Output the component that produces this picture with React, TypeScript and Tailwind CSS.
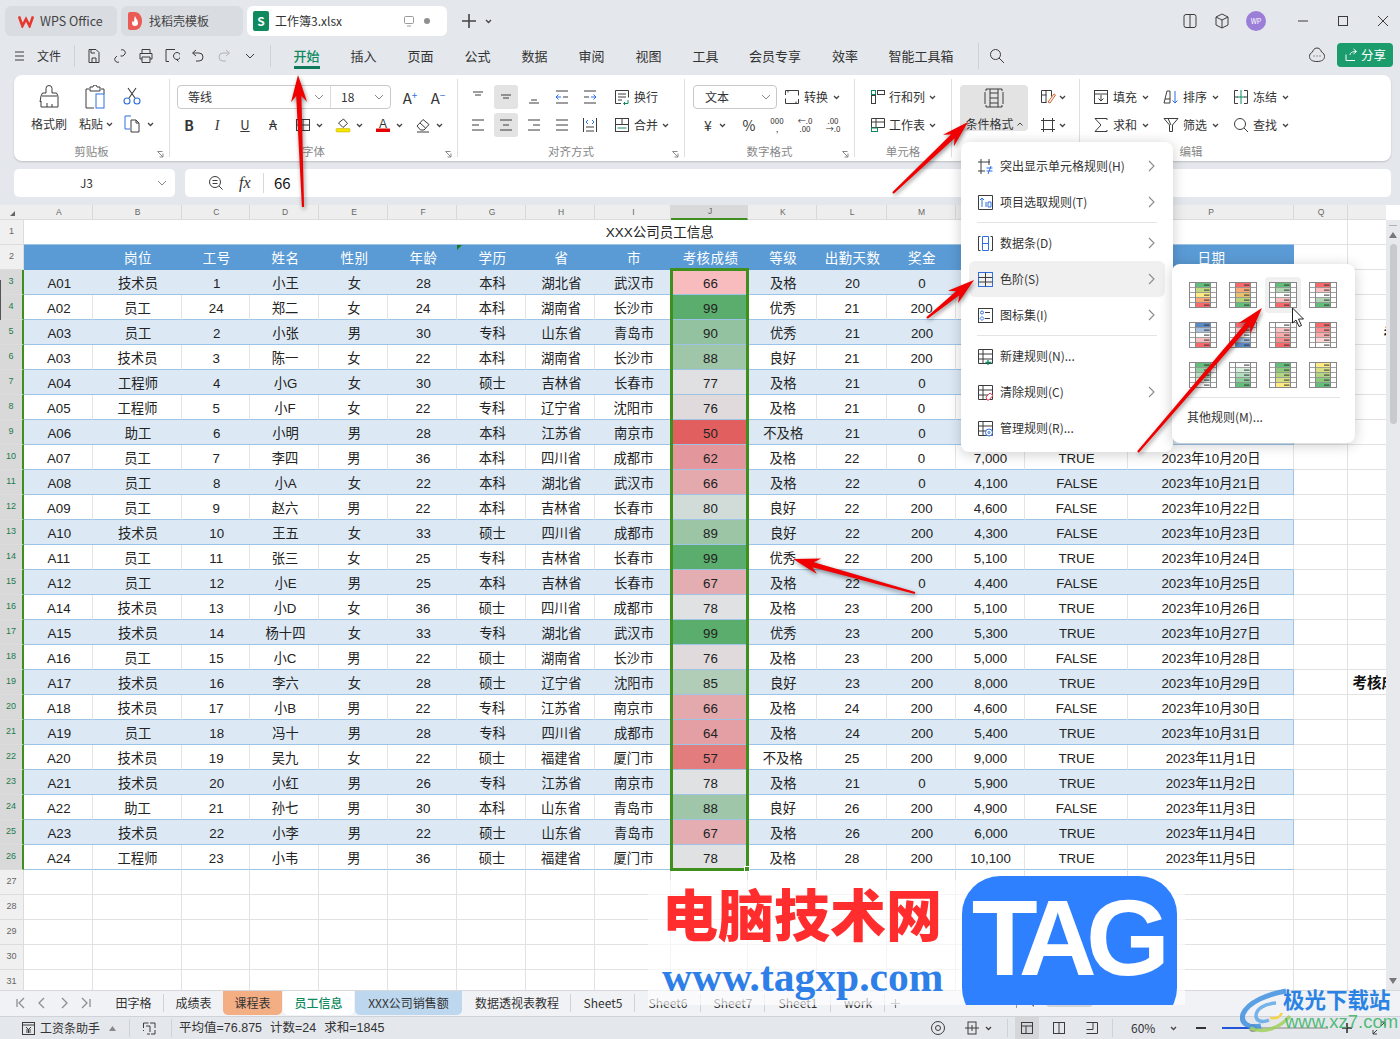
import React from "react";

type P = { children?: React.ReactNode };
const UI = "[font-family:'Noto_Sans_CJK_SC','Liberation_Sans',sans-serif]";
const CELL = "[font-family:'Liberation_Sans','Noto_Sans_CJK_SC',sans-serif]";

function Ico({ s = 16, c = "#3c3c3c", w = 1, children }: { s?: number; c?: string; w?: number; children?: React.ReactNode }) {
  return (
    <svg width={s} height={s} viewBox={`0 0 ${s} ${s}`} fill="none" stroke={c} strokeWidth={w} className="shrink-0">
      {children}
    </svg>
  );
}
const Chev = ({ c = "#444" }: { c?: string }) => (
  <svg width="7" height="5" viewBox="0 0 7 5" fill="none" stroke={c} strokeWidth="1.3" className="shrink-0">
    <path d="M1 1l2.5 2.5L6 1" />
  </svg>
);
const Big = ({ c = "#888" }: { c?: string }) => (
  <svg width="10" height="6" viewBox="0 0 10 6" fill="none" stroke={c} strokeWidth="1" className="shrink-0">
    <path d="M1 1l4 4 4-4" />
  </svg>
);
const Right = () => (
  <svg width="7" height="12" viewBox="0 0 7 12" fill="none" stroke="#8a8a8a" strokeWidth="1.1" className="shrink-0">
    <path d="M1 1l5 5-5 5" />
  </svg>
);
const BLUE = "#2f6fe0";
const GREEN = "#0f8a5f";

/* ---------- title bar ---------- */
function TitleBar() {
  return (
    <div className="flex items-center h-[38px] pl-[5px] pt-[6px] pb-[2px] shrink-0">
      <div className="flex items-center w-[112px] h-[30px] rounded-[6px] bg-[#d9dce1] pl-[13px] gap-[6px]">
        <svg width="16" height="13" viewBox="0 0 16 13" fill="none" stroke="#e8372c" strokeWidth="2.6" className="shrink-0">
          <path d="M1 1.5l3.4 9.5L8 4l3.6 7L15 1.5" />
        </svg>
        <span className="text-[12.5px] text-[#444]">WPS Office</span>
      </div>
      <div className="flex items-center w-[122px] h-[30px] rounded-[6px] bg-[#d9dce1] ml-[4px] pl-[7px] gap-[7px]">
        <svg width="14" height="18" viewBox="0 0 14 18" className="shrink-0">
          <path d="M0 2a2 2 0 012-2h5c4 0 7 4 7 9s-3 9-7 9H2a2 2 0 01-2-2z" fill="#ea5b55" />
          <path d="M7 4c1 3 3 4 3 7a3 3 0 01-6 0c0-1 .5-2 1-2 .5 1 1 1 1 1 .5-2 0-4 1-6z" fill="#fff" />
        </svg>
        <span className="text-[12px] text-[#444]">找稻壳模板</span>
      </div>
      <div className="flex items-center w-[200px] h-[30px] rounded-[6px] bg-white ml-[4px] pl-[6px]">
        <div className="w-[16px] h-[20px] rounded-[2px] bg-[#0f8a5f] flex items-center justify-center text-white text-[12px] font-bold">S</div>
        <span className="ml-[6px] text-[12px] text-[#333] w-[128px]">工作簿3.xlsx</span>
        <Ico s={12} c="#9a9a9a">
          <rect x="1.5" y="1.5" width="9" height="7" rx="1" />
          <path d="M4 11h4" />
        </Ico>
        <span className="ml-[9px] w-[6px] h-[6px] rounded-full bg-[#8f8f8f]" />
      </div>
      <svg width="16" height="16" viewBox="0 0 16 16" stroke="#444" strokeWidth="1.6" className="ml-[14px] shrink-0">
        <path d="M8 1v14M1 8h14" />
      </svg>
      <span className="ml-[8px]"><Chev /></span>
      <div className="ml-auto flex items-center">
        <Ico s={16}>
          <rect x="2" y="1.5" width="12" height="13" rx="2" />
          <path d="M8 1.5v13" />
        </Ico>
        <span className="ml-[16px]">
          <Ico s={16}>
            <path d="M8 1l6 3v8l-6 3-6-3V4zM2 4l6 3 6-3M8 7v8" />
          </Ico>
        </span>
        <div className="ml-[16px] w-[20px] h-[20px] rounded-full bg-[#9b7ed8] text-white text-[7px] flex items-center justify-center">WP</div>
        <span className="ml-[31px]"><Ico s={12}><path d="M1 6h10" /></Ico></span>
        <span className="ml-[28px]"><Ico s={12}><rect x="1.5" y="1.5" width="9" height="9" /></Ico></span>
        <span className="ml-[28px] mr-[11px]"><Ico s={12}><path d="M1 1l10 10M11 1L1 11" /></Ico></span>
      </div>
    </div>
  );
}

/* ---------- menu bar ---------- */
const qa: React.ReactNode[] = [
  <path key="s" d="M3 1.5h7l3 3v10H3zM6 14.5V10h4v4.500M5 1.500V5h4" />,
  <path key="l" d="M9 2a3 3 0 014 4l-2 2H8.500M7 14a3 3 0 01-4-4l2-2" />,
  <path key="p" d="M4 5V1.500h8V5M2 5.500h12V11h-2M2 5.500V11h2M4 9h8v5.500H4z" />,
  <g key="q"><path d="M11 1.500H2v12h3M9.500 8a3.500 3.500 0 110 .01M12 11l2.500 2.500" /></g>,
  <path key="u" d="M6 2L2.500 5 6 8M3 5h6a4 4 0 010 8H6" />,
  <path key="r" d="M10 2l3.500 3L10 8M13 5H7a4 4 0 000 8h3" stroke="#b4b4b4" />,
  <path key="c" d="M4 6l4 4 4-4" />,
];
function MenuBar() {
  const tabs: [string, string][] = [
    ["插入", "w-[57px]"], ["页面", "w-[57px]"], ["公式", "w-[57px]"], ["数据", "w-[57px]"], ["审阅", "w-[57px]"], ["视图", "w-[57px]"], ["工具", "w-[57px]"],
    ["会员专享", "w-[82px]"], ["效率", "w-[58px]"], ["智能工具箱", "w-[94px]"],
  ];
  return (
    <div className="flex items-center h-[32px] pl-[14px] pt-[4px] shrink-0 text-[13px] text-[#333]">
      <Ico s={12}><path d="M1 2h9M1 6h9M1 10h9" /></Ico>
      <span className="ml-[11px] text-[12px]">文件</span>
      <div className="ml-[13px] w-px h-[22px] bg-[#cfd2d6]" />
      <div className="flex ml-[6px]">
        {qa.map((q, i) => (
          <div key={i} className="w-[26px] flex justify-center"><Ico s={16}>{q}</Ico></div>
        ))}
      </div>
      <div className="ml-[7px] w-px h-[22px] bg-[#cfd2d6]" />
      <div className="ml-[7px] w-[57px] flex justify-center">
        <span className="relative text-[#0f8a5f] font-medium">
          开始
          <span className="absolute left-0 right-0 bottom-[-3px] h-[3px] bg-[#0f7b5a]" />
        </span>
      </div>
      {tabs.map(([t, w]) => (
        <div key={t} className={`${w} flex justify-center`}>{t}</div>
      ))}
      <div className="ml-[10px] w-px h-[26px] bg-[#cfd2d6]" />
      <span className="ml-[10px]">
        <Ico s={16}><circle cx="6.500" cy="6.500" r="5" /><path d="M10 10l5 5" /></Ico>
      </span>
      <div className="ml-auto flex items-center mr-[7px] mt-[-2px]">
        <Ico s={18}>
          <path d="M9 2c3 0 4 2.500 4.500 4 2 1 3 2.500 3 4.500 0 3-2.500 5-7.500 5s-7.500-2-7.500-5c0-2 1-3.500 3-4.500C5 4.500 6 2 9 2z" />
          <path d="M5.500 10h1M8.500 10h1M11.500 10h1" />
        </Ico>
        <div className="ml-[11px] w-[56px] h-[24px] rounded-[4px] bg-[#1b9c6d] text-white text-[12.500px] flex items-center justify-center gap-[3px]">
          <Ico s={14} c="#fff"><path d="M2 6.500V12.500h9M6 7c0-2 2-3.500 6-3.500M9.500 1l3 2.500-3 2.500" /></Ico>
          分享
        </div>
      </div>
    </div>
  );
}

/* ---------- ribbon ---------- */
const Launcher = () => (
  <span className="absolute right-[5px] bottom-[3px]">
    <svg width="7" height="7" viewBox="0 0 7 7" fill="none" stroke="#8a8a8a" strokeWidth="1"><path d="M.5 .5h5M.5 .5l5.500 5.500M6 2.500V6H2.500" /></svg>
  </span>
);
function Group({ w, label, lab = "w-full", launcher, children }: { w: string; label: string; lab?: string; launcher?: boolean; children?: React.ReactNode }) {
  return (
    <div className={`relative ${w} shrink-0 pt-[10px] flex flex-col`}>
      <div className="h-[52px] shrink-0">{children}</div>
      <div className={`${lab} h-[17px] mt-[6px] flex items-center justify-center text-[11.500px] text-[#888]`}>{label}</div>
      {launcher && <Launcher />}
    </div>
  );
}
const Sep = () => <div className="w-px h-[78px] self-center bg-[#dfdfdf] shrink-0" />;
const Cell28 = ({ on, children }: { on?: boolean; children?: React.ReactNode }) => (
  <div className="w-[28px] h-[24px] flex items-center justify-center">
    <div className={`w-[24px] h-[24px] rounded-[3px] flex items-center justify-center ${on ? "bg-[#e3e3e3]" : ""}`}>{children}</div>
  </div>
);
const Drop = ({ children }: P) => (
  <div className="w-[40px] h-[24px] pl-[8px] flex items-center gap-[5px]">{children}<Chev /></div>
);
const TextDrop = ({ icon, t, w = "gap-[4px]" }: { icon: React.ReactNode; t: string; w?: string }) => (
  <div className={`flex items-center ${w} text-[12px] text-[#333] h-[24px]`}>
    {icon}<span className="whitespace-nowrap">{t}</span><span className="ml-[1px]"><Chev /></span>
  </div>
);
const Row = ({ children, cls = "" }: { children?: React.ReactNode; cls?: string }) => <div className={`flex items-center h-[24px] ${cls}`}>{children}</div>;
const lines = (ys: [number, number, number][], c = "#3c3c3c") => ys.map(([a, b, y], i) => <path key={i} d={`M${a} ${y}H${b}`} stroke={c} />);

function Ribbon() {
  return (
    <div className="flex ml-[14px] mr-[9px] mt-[5px] h-[86px] shrink-0 bg-white rounded-[8px] shadow-[0_1px_2px_rgba(0,0,0,0.18)] text-[12px]">
      <Group w="w-[155px]" label="剪贴板" launcher>
        <div className="flex pl-[15px]">
          <div className="w-[40px] flex flex-col items-center">
            <div className="h-[24px]">
              <Ico s={24}>
                <path d="M9 3.500a3 3 0 016 0V8h4.500l1.500 3v11H4v-6l-1 1 1-6 1.500-3H9zM5 11h15M10 22v-4M15 22v-3" />
              </Ico>
            </div>
            <div className="mt-[6px] whitespace-nowrap">格式刷</div>
          </div>
          <div className="ml-[10px] w-[44px] flex flex-col items-start">
            <div className="h-[24px] ml-[4px]">
              <Ico s={24}>
                <path d="M6 4H3v19h8M18 4h3v5M7 6V2h3a2 2 0 014 0h3v4z" />
                <rect x="13" y="9" width="8" height="14" stroke={BLUE} />
              </Ico>
            </div>
            <div className="mt-[6px] flex items-center gap-[3px] whitespace-nowrap">粘贴<Chev /></div>
          </div>
          <div className="ml-[-1px] flex flex-col">
            <div className="h-[24px] mt-[2px]">
              <Ico s={20} w={1.1}>
                <path d="M6 1l7 10M14 1L7 11" stroke="#3c3c3c" />
                <circle cx="5" cy="14" r="3" stroke={BLUE} />
                <circle cx="15" cy="14" r="3" stroke={BLUE} />
              </Ico>
            </div>
            <div className="mt-[4px] ml-[1px] flex items-center gap-[6px]">
              <Ico s={18}>
                <path d="M8 1H2v13h5" stroke={BLUE} />
                <path d="M8 5h5l3 3v9H8zM13 5v3h3" />
              </Ico>
              <Chev />
            </div>
          </div>
        </div>
      </Group>
      <Sep />
      <Group w="w-[287px]" label="字体" launcher>
        <Row cls="pl-[7px]">
          <div className="w-[214px] h-[24px] rounded-[4px] border border-[#c8c8c8] flex items-center">
            <div className="w-[153px] h-full flex items-center justify-between pl-[10px] pr-[6px] border-r border-[#dcdcdc]">等线<Big /></div>
            <div className="flex-1 h-full flex items-center justify-between pl-[10px] pr-[6px]">18<Big /></div>
          </div>
          <div className="ml-[5px]"><Cell28><span className="text-[15px] leading-none">A<sup className="text-[10px] text-[#2f6fe0]">+</sup></span></Cell28></div>
          <Cell28><span className="text-[15px] leading-none">A<sup className="text-[10px] text-[#2f6fe0]">−</sup></span></Cell28>
        </Row>
        <Row cls="mt-[4px] pl-[5px]">
          <Cell28><span className="text-[14px] font-bold">B</span></Cell28>
          <Cell28><span className="text-[14px] italic [font-family:'Liberation_Serif',serif]">I</span></Cell28>
          <Cell28><span className="text-[13px] underline">U</span></Cell28>
          <Cell28><span className="text-[13px] line-through">A</span></Cell28>
          <Drop><Ico s={16}><rect x="1.500" y="2.500" width="13" height="11" /><path d="M8 2.500v11M1.500 8h13" /></Ico></Drop>
          <Drop>
            <Ico s={16}>
              <path d="M3.500 6l5-4 4 4.500-4.500 4z" />
              <rect x="1" y="11.500" width="14" height="3.500" rx="1" fill="#f5e400" stroke="#b8a800" strokeWidth=".5" />
            </Ico>
          </Drop>
          <Drop>
            <svg width="16" height="16" viewBox="0 0 16 16" className="shrink-0">
              <text x="8" y="10.500" textAnchor="middle" fontSize="12" fill="#333" fontFamily="Liberation Sans">A</text>
              <rect x="1" y="11.500" width="14" height="3.500" rx=".5" fill="#e30000" />
            </svg>
          </Drop>
          <Drop>
            <Ico s={16}>
              <path d="M2 9l6-6.500 6 5-5 5.500H5.500zM5 6l5.500 5M2 15h12" />
            </Ico>
          </Drop>
        </Row>
      </Group>
      <Sep />
      <Group w="w-[226px]" label="对齐方式" launcher>
        <Row cls="pl-[6px]">
          <Cell28><Ico>{lines([[3, 13, 3], [5, 11, 6]])}</Ico></Cell28>
          <Cell28 on><Ico>{lines([[3, 13, 6], [5, 11, 9]])}</Ico></Cell28>
          <Cell28><Ico>{lines([[5, 11, 11], [3, 13, 14]])}</Ico></Cell28>
          <Cell28>
            <Ico>
              {lines([[2, 14, 2], [9, 14, 8], [2, 14, 14]])}
              <path d="M7 8H2M4.500 5.500L2 8l2.500 2.500" stroke={BLUE} />
            </Ico>
          </Cell28>
          <Cell28>
            <Ico>
              {lines([[2, 14, 2], [2, 7, 8], [2, 14, 14]])}
              <path d="M9 8h5M11.500 5.500L14 8l-2.500 2.500" stroke={BLUE} />
            </Ico>
          </Cell28>
          <div className="ml-[10px] flex items-center gap-[4px]">
            <Ico>
              <path d="M7 14.500H1.500v-13h13v7" />
              {lines([[4, 12, 5], [4, 12, 8], [4, 8, 11]])}
              <path d="M14 11v3.500h-4M11 13l-1.500 1.500L11 16" stroke={GREEN} />
            </Ico>
            换行
          </div>
        </Row>
        <Row cls="mt-[4px] pl-[6px]">
          <Cell28><Ico>{lines([[2, 14, 3], [2, 9, 8], [2, 14, 13]])}</Ico></Cell28>
          <Cell28 on><Ico>{lines([[2, 14, 3], [5, 11, 8], [2, 14, 13]])}</Ico></Cell28>
          <Cell28><Ico>{lines([[2, 14, 3], [7, 14, 8], [2, 14, 13]])}</Ico></Cell28>
          <Cell28><Ico>{lines([[2, 14, 3], [2, 14, 8], [2, 14, 13]])}</Ico></Cell28>
          <Cell28>
            <Ico>
              <path d="M1.500 1v14M14.500 1v14M4 14h8M4 10h8" />
              <path d="M6 3L4 5l2 2M10 3l2 2-2 2" stroke={BLUE} />
            </Ico>
          </Cell28>
          <div className="ml-[10px] flex items-center gap-[4px]">
            <Ico>
              <rect x="1.500" y="1.500" width="13" height="13" />
              <path d="M8 1.500v6M1.500 7.500h13" />
              <path d="M3.500 11h9" stroke={GREEN} />
            </Ico>
            合并<Chev />
          </div>
        </Row>
      </Group>
      <Sep />
      <Group w="w-[169px]" label="数字格式" launcher>
        <Row cls="pl-[8px]">
          <div className="w-[84px] h-[24px] rounded-[4px] border border-[#c8c8c8] flex items-center justify-between pl-[11px] pr-[5px]">文本<Big /></div>
          <div className="ml-[7px]">
            <TextDrop t="转换" icon={
              <Ico>
                <path d="M12 1.500h2.500v5M4 14.500H1.500v-5M4 1.500h8M4 3.500v-2M12 14.500H4M12 12.500v2M1.500 6V1.500H4M14.500 10v4.500H12" />
              </Ico>
            } />
          </div>
        </Row>
        <Row cls="mt-[4px] pl-[8px]">
          <div className="w-[42px] flex items-center pl-[7px] gap-[3px] text-[14px]"><span className="w-[16px] text-center">¥</span><Chev /></div>
          <Cell28><span className="text-[14px]">%</span></Cell28>
          <Cell28><span className="text-[8px] leading-[8px] text-center">000<br />,</span></Cell28>
          <Cell28><span className="text-[8px] leading-[8px] text-center">←.0<br />.00</span></Cell28>
          <Cell28><span className="text-[8px] leading-[8px] text-center">.00<br />→.0</span></Cell28>
        </Row>
      </Group>
      <Sep />
      <Group w="w-[96px]" label="单元格">
        <Row cls="pl-[15px]">
          <TextDrop w="gap-[3px]" t="行和列" icon={
            <Ico>
              <rect x="1.500" y="1.500" width="4" height="4" stroke={GREEN} />
              <rect x="1.500" y="6.500" width="4" height="8" />
              <rect x="7.500" y="1.500" width="7" height="4" />
            </Ico>
          } />
        </Row>
        <Row cls="mt-[4px] pl-[15px]">
          <TextDrop w="gap-[3px]" t="工作表" icon={
            <Ico>
              <path d="M1.500 1.500h13v9h-13zM1.500 5h13M6 1.500v9" />
              <rect x="1.500" y="11" width="6" height="3.500" stroke={GREEN} />
            </Ico>
          } />
        </Row>
      </Group>
      <Sep />
      <Group w="w-[127px]" label="样式">
        <div className="flex pl-[8px]">
          <div className="w-[68px] h-[46px] rounded-[4px] bg-[#e3e3e3] flex flex-col items-center">
            <div className="mt-[3px] h-[20px]">
              <Ico s={20}>
                <path d="M2 3V1h16v2M2 17v2h16v-2M1 4v12M19 4v12M6 1v18M14 1v18M6 10h8M6 5h8M6 15h8" />
              </Ico>
            </div>
            <div className="mt-[7px] leading-[18px] flex items-center gap-[3px] whitespace-nowrap">
              条件格式
              <svg width="6" height="4" viewBox="0 0 6 4" fill="none" stroke="#444"><path d="M.5 3.500L3 1l2.500 2.500" /></svg>
            </div>
          </div>
          <div className="ml-[12px] flex flex-col">
            <Row>
              <Ico>
                <path d="M1.500 1.500h10v6M1.500 1.500v12h5M1.500 6h5M6 1.500v12" />
                <path d="M8 13l6-8 1.500 1L10 14z" stroke="#d0632a" />
              </Ico>
              <span className="ml-[3px]"><Chev /></span>
            </Row>
            <Row cls="mt-[4px]">
              <Ico><path d="M3.500 1v14M12.500 1v14M1 3.500h14M1 12.500h14" /></Ico>
              <span className="ml-[3px]"><Chev /></span>
            </Row>
          </div>
        </div>
      </Group>
      <Sep />
      <Group w="flex-1" label="编辑" lab="w-[222px]">
        <Row cls="pl-[13px] gap-[15px]">
          <div className="w-[55px]"><TextDrop t="填充" icon={<Ico><rect x="1.500" y="1.500" width="13" height="13" /><path d="M1.500 5h13M8 6v6M5.500 9.500L8 12l2.500-2.500" /></Ico>} /></div>
          <div className="w-[55px]"><TextDrop t="排序" icon={<Ico><path d="M1 14L4 2h3v12H1M2 10h5" /><path d="M12 2v12M9.500 11.500L12 14l2.500-2.500" stroke={BLUE} /></Ico>} /></div>
          <div className="w-[55px]"><TextDrop t="冻结" icon={<Ico><path d="M5 1.500H1.500v13H5M11 1.500h3.500v13H11M1.500 8H5M11 8h3.500" /><path d="M8 1v14M4 8h8" stroke={GREEN} /></Ico>} /></div>
        </Row>
        <Row cls="mt-[4px] pl-[13px] gap-[15px]">
          <div className="w-[55px]"><TextDrop t="求和" icon={<Ico><path d="M14 3V1.500H2l6 6.500-6 6.500h12V13" /></Ico>} /></div>
          <div className="w-[55px]"><TextDrop t="筛选" icon={<Ico><path d="M1 1.500h14L9.500 8v6.500l-3 0V8zM5 1.500L8 8" /></Ico>} /></div>
          <div className="w-[55px]"><TextDrop t="查找" icon={<Ico><circle cx="7" cy="7" r="5.500" /><path d="M11 11l4 4" /></Ico>} /></div>
        </Row>
      </Group>
    </div>
  );
}

function FormulaBar() {
  return (
    <div className="flex mt-[8px] ml-[14px] mr-[9px] h-[28px] shrink-0 gap-[10px]">
      <div className="w-[161px] rounded-[5px] bg-white flex items-center pr-[8px]">
        <span className="flex-1 text-center text-[12px] pl-[2px]">J3</span>
        <Big />
      </div>
      <div className="flex-1 rounded-[5px] bg-white flex items-center">
        <span className="ml-[23px]"><Ico><circle cx="7" cy="7" r="5.500" /><path d="M11 11l3.500 3.500M4.500 5.500h5M4.500 8.500h5" /></Ico></span>
        <span className="ml-[15px] italic text-[16px] [font-family:'Liberation_Serif',serif] w-[18px]">fx</span>
        <div className="ml-[6px] w-px h-[20px] bg-[#d8d8d8]" />
        <span className="ml-[10px] text-[15px] text-[#111]">66</span>
      </div>
    </div>
  );
}

/* ---------- sheet ---------- */
const COLS = "grid grid-cols-[24px_68.5px_89px_68.5px_69px_69px_69px_69px_69px_76px_77px_68.5px_70px_69px_69px_103px_166px_54px_39px]";
const letters = ["A", "B", "C", "D", "E", "F", "G", "H", "I", "J", "K", "L", "M", "N", "O", "P", "Q", ""];
const heads = ["", "岗位", "工号", "姓名", "性别", "年龄", "学历", "省", "市", "考核成绩", "等级", "出勤天数", "奖金", "工资", "是否转正", "日期"];
const raw = `A01 技术员 1 小王 女 28 本科 湖北省 武汉市 66 及格 20 0 5,100 TRUE 2023年10月13日
A02 员工 24 郑二 女 24 本科 湖南省 长沙市 99 优秀 21 200 4,800 TRUE 2023年10月14日
A03 员工 2 小张 男 30 专科 山东省 青岛市 90 优秀 21 200 4,600 FALSE 2023年10月15日
A03 技术员 3 陈一 女 22 本科 湖南省 长沙市 88 良好 21 200 5,200 TRUE 2023年10月16日
A04 工程师 4 小G 女 30 硕士 吉林省 长春市 77 及格 21 0 6,800 TRUE 2023年10月17日
A05 工程师 5 小F 女 22 专科 辽宁省 沈阳市 76 及格 21 0 6,200 TRUE 2023年10月18日
A06 助工 6 小明 男 28 本科 江苏省 南京市 50 不及格 21 0 4,000 FALSE 2023年10月19日
A07 员工 7 李四 男 36 本科 四川省 成都市 62 及格 22 0 7,000 TRUE 2023年10月20日
A08 员工 8 小A 女 22 本科 湖北省 武汉市 66 及格 22 0 4,100 FALSE 2023年10月21日
A09 员工 9 赵六 男 22 本科 吉林省 长春市 80 良好 22 200 4,600 FALSE 2023年10月22日
A10 技术员 10 王五 女 33 硕士 四川省 成都市 89 良好 22 200 4,300 FALSE 2023年10月23日
A11 员工 11 张三 女 25 专科 吉林省 长春市 99 优秀 22 200 5,100 TRUE 2023年10月24日
A12 员工 12 小E 男 25 本科 吉林省 长春市 67 及格 22 0 4,400 FALSE 2023年10月25日
A14 技术员 13 小D 女 36 硕士 四川省 成都市 78 及格 23 200 5,100 TRUE 2023年10月26日
A15 技术员 14 杨十四 女 33 专科 湖北省 武汉市 99 优秀 23 200 5,300 TRUE 2023年10月27日
A16 员工 15 小C 男 22 硕士 湖南省 长沙市 76 及格 23 200 5,000 FALSE 2023年10月28日
A17 技术员 16 李六 女 28 硕士 辽宁省 沈阳市 85 良好 23 200 8,000 TRUE 2023年10月29日
A18 技术员 17 小B 男 22 专科 江苏省 南京市 66 及格 24 200 4,600 FALSE 2023年10月30日
A19 员工 18 冯十 男 28 专科 四川省 成都市 64 及格 24 200 5,400 TRUE 2023年10月31日
A20 技术员 19 吴九 女 22 硕士 福建省 厦门市 57 不及格 25 200 9,000 TRUE 2023年11月1日
A21 技术员 20 小红 男 26 专科 江苏省 南京市 78 及格 21 0 5,900 TRUE 2023年11月2日
A22 助工 21 孙七 男 30 本科 山东省 青岛市 88 良好 26 200 4,900 FALSE 2023年11月3日
A23 技术员 22 小李 男 22 硕士 山东省 青岛市 67 及格 26 200 6,000 TRUE 2023年11月4日
A24 工程师 23 小韦 男 36 硕士 福建省 厦门市 78 及格 28 200 10,100 TRUE 2023年11月5日`
  .split("\n")
  .map((l) => l.split(" "));
const jc = [
  "bg-[#f9bcbe]", "bg-[#5aad6c]", "bg-[#93c2a1]", "bg-[#9fc6a9]", "bg-[#e0dfe1]", "bg-[#e0dadc]", "bg-[#e25f60]", "bg-[#e3979c]",
  "bg-[#e3a9ad]", "bg-[#d1dcd9]", "bg-[#9bc5a5]", "bg-[#5aad6c]", "bg-[#e3adb1]", "bg-[#e0e1e3]", "bg-[#5aad6c]", "bg-[#e0dadc]",
  "bg-[#b1cdb8]", "bg-[#e3a9ad]", "bg-[#e39fa3]", "bg-[#e37c7d]", "bg-[#e0e1e3]", "bg-[#9fc6a9]", "bg-[#e3adb1]", "bg-[#e0e1e3]",
];
const RowHead = ({ n, sel }: { n: number; sel?: boolean }) => (
  <div className={`flex items-center justify-center text-[9px] border-b border-[#dcdcdc] ${sel ? "bg-[#d9d9d9] text-[#1d7a4c] border-r-[2px] border-r-[#3f8f1f]" : "bg-[#f0f0f0] text-[#666] border-r border-r-[#dcdcdc]"}`}>{n}</div>
);
const Blank = ({ n }: { n: number }) => (
  <>
    {Array.from({ length: n }).map((_, i) => (
      <div key={i} className="border-r border-b border-[#e2e2e2]" />
    ))}
  </>
);
function Sheet() {
  return (
    <div className={`relative flex mt-[8px] h-[785px] shrink-0 bg-white text-[13.300px] text-[#222] ${CELL}`}>
      <div className="w-[1386px] overflow-hidden">
        <div className={`${COLS} h-[15px] bg-[#eeeeee]`}>
          <div className="flex items-end justify-center pb-[2px] border-b border-[#dcdcdc]">
            <svg width="7" height="7" viewBox="0 0 7 7"><path d="M6 1v5H1z" fill="#666" /></svg>
          </div>
          {letters.map((l, i) => (
            <div key={i} className={`flex items-center justify-center pl-[2px] text-[8.500px] text-[#666] border-r border-[#d8d8d8] ${l === "J" ? "bg-[#d9d9d9] border-b-[2px] border-b-[#3f8f1f]" : "border-b border-b-[#dcdcdc]"}`}>{l}</div>
          ))}
        </div>
        <div className={`${COLS} h-[25px]`}>
          <RowHead n={1} />
          <div className="col-span-16 flex items-center justify-center pt-[3px] pl-[2px] border-b border-[#9dc3e6] text-[13.500px]">XXX公司员工信息</div>
          <Blank n={2} />
        </div>
        <div className={`${COLS} h-[25px]`}>
          <RowHead n={2} />
          {heads.map((h, i) => (
            <div key={i} className="relative bg-[#5b9bd5] text-white text-[13.500px] tracking-[0.4px] flex items-center justify-center pt-[3px] pl-[2px]">
              {h}
              {i === 6 && <span className="absolute left-0 top-0 border-t-[5px] border-r-[5px] border-t-[#1a7a1a] border-r-transparent" />}
            </div>
          ))}
          <Blank n={2} />
        </div>
        {raw.map((r, ri) => {
          const odd = ri % 2 === 0;
          return (
            <div key={ri} className={`${COLS} h-[25px]`}>
              <RowHead n={ri + 3} sel />
              {r.map((v, ci) => (
                <div
                  key={ci}
                  className={`flex items-center justify-center pt-[3px] pl-[2px] border-b border-[#9dc3e6] whitespace-nowrap ${ci === 9 ? jc[ri] : odd ? "bg-[#dce9f5]" : "bg-white border-r border-r-[#e4e4e4]"} ${ci === 15 ? "border-r border-r-[#9dc3e6]" : ""}`}
                >
                  {v}
                </div>
              ))}
              <div className="border-r border-b border-[#e2e2e2]" />
              <div className="border-b border-[#e2e2e2] overflow-hidden whitespace-nowrap flex items-center pt-[3px] font-bold text-[14.500px] text-[#111]">
                {ri === 2 && <span className="pl-[36px]">考</span>}
                {ri === 16 && <span className="pl-[5px]">考核成绩</span>}
              </div>
            </div>
          );
        })}
        {[27, 28, 29, 30, 31].map((n) => (
          <div key={n} className={`${COLS} h-[25px]`}>
            <RowHead n={n} />
            <Blank n={18} />
          </div>
        ))}
      </div>
      <div className="flex-1 bg-[#e8e9ed] flex flex-col items-center mt-[15px] relative">
        <div className="mt-[5px] w-[8px] h-px bg-[#b4b4b4]" />
        <svg width="8" height="6" viewBox="0 0 8 6" className="mt-[6px]"><path d="M4 0l4 6H0z" fill="#777" /></svg>
        <div className="mt-[6px] w-[7px] h-[180px] rounded-full bg-[#c9cacd]" />
        <svg width="8" height="6" viewBox="0 0 8 6" className="mt-auto mb-[6px]"><path d="M0 0h8L4 6z" fill="#777" /></svg>
      </div>
      {/* selection */}
      <div className="absolute left-[670px] top-[63px] w-[79px] h-[603px] border-[3px] border-[#3f8f1f] pointer-events-none">
        <span className="absolute right-[-4px] bottom-[-4px] w-[6px] h-[6px] bg-[#3f8f1f] border border-white" />
      </div>
      <span className="absolute left-0 top-[75px] w-px h-[40px] bg-[#555]" />
    </div>
  );
}

/* ---------- tabs / status ---------- */
function SheetTabs() {
  const Tab = ({ t, w, cls = "", sep = true }: { t: string; w: string; cls?: string; sep?: boolean }) => (
    <div className={`${w} h-[24px] flex items-center justify-center text-[12px] ${cls} ${sep ? "relative after:absolute after:right-0 after:top-[3px] after:h-[18px] after:w-px after:bg-[#cfd2d6]" : ""}`}>{t}</div>
  );
  return (
    <div className="flex h-[26px] shrink-0 bg-[#f1f2f5] border-t border-[#d6d8db] text-[#333]">
      <div className="flex items-center ml-[9px] w-[88px] h-[24px]">
        {["M3 2v8M10 1L5 6l5 5", "M8 1L3 6l5 5", "M4 1l5 5-5 5", "M2 1l5 5-5 5M10 2v8"].map((d, i) => (
          <div key={i} className="w-[22px] flex justify-center">
            <svg width="12" height="12" viewBox="0 0 12 12" fill="none" stroke="#8e8e8e" strokeWidth="1.300"><path d={d} /></svg>
          </div>
        ))}
      </div>
      <div className="ml-[6px] flex items-start">
        <Tab t="田字格" w="w-[61px]" />
        <Tab t="成绩表" w="w-[59px]" sep={false} />
        <Tab t="课程表" w="w-[59px]" sep={false} cls="bg-[#f4ae83] rounded-b-[5px]" />
        <div className="w-[1px]" />
        <Tab t="员工信息" w="w-[71px]" sep={false} cls="bg-white rounded-b-[5px] text-[#0f8a5f] font-medium" />
        <div className="w-[1px]" />
        <Tab t="XXX公司销售额" w="w-[107px]" sep={false} cls="bg-[#bdd7ee] rounded-b-[5px]" />
        <div className="w-[1px]" />
        <Tab t="数据透视表教程" w="w-[108px]" />
        <Tab t="Sheet5" w="w-[64px]" />
        <Tab t="Sheet6" w="w-[66px]" />
        <Tab t="Sheet7" w="w-[64px]" />
        <Tab t="Sheet1" w="w-[66px]" />
        <Tab t="work" w="w-[54px]" />
        <div className="w-[21px] h-[24px] flex items-center justify-center">
          <svg width="11" height="11" viewBox="0 0 11 11" stroke="#777" strokeWidth="1.200"><path d="M5.500 1v9M1 5.500h9" /></svg>
        </div>
      </div>
      <div className="ml-[110px] flex items-center h-[24px] gap-[12px]">
        <div className="w-px h-[10px] bg-[#999]" />
        <svg width="5" height="8" viewBox="0 0 5 8"><path d="M5 0v8L0 4z" fill="#777" /></svg>
        <div className="w-[47px] h-[8px] rounded-full bg-[#d3d4d8]" />
      </div>
    </div>
  );
}

function StatusBar() {
  return (
    <div className="flex items-center flex-1 bg-[#e4e7ec] border-t border-[#cfd2d6] text-[12px] text-[#333]">
      <span className="ml-[21px]">
        <Ico s={15}><rect x="1.500" y="1.500" width="12" height="12" /><path d="M1.500 4h12M5 6l2.500 2.500L10 6M7.500 8.500V12M5 9h5M5 11h5" /></Ico>
      </span>
      <span className="ml-[4px]">工资条助手</span>
      <svg width="7" height="5" viewBox="0 0 7 5" className="ml-[9px]"><path d="M3.500 0L7 5H0z" fill="#888" /></svg>
      <div className="ml-[13px] w-px h-[18px] bg-[#cfd2d6]" />
      <span className="ml-[12px]">
        <Ico s={15}><path d="M1.500 7V2h5M8 2h5v5M13 9v4H9M8 13h-3M1.500 9v1M4 5h4v6" /></Ico>
      </span>
      <div className="ml-[14px] w-px h-[18px] bg-[#cfd2d6]" />
      <span className={`ml-[7px] text-[12.500px] ${CELL}`}>平均值=76.875</span>
      <span className={`ml-[8px] text-[12.500px] ${CELL}`}>计数=24</span>
      <span className={`ml-[8px] text-[12.500px] ${CELL}`}>求和=1845</span>
      <div className="ml-auto mr-[14px] flex items-center h-full">
        <Ico s={16}><circle cx="8" cy="8" r="6.500" /><circle cx="8" cy="8" r="2.500" /></Ico>
        <span className="ml-[18px]"><Ico s={16}><rect x="4" y="2" width="8" height="12" /><path d="M1 8h14M8 5v6" /></Ico></span>
        <span className="ml-[5px]"><Chev /></span>
        <div className="ml-[15px] w-px h-[18px] bg-[#cfd2d6]" />
        <div className="ml-[7px] w-[24px] h-full bg-[#d4d6da] flex items-center justify-center">
          <Ico s={14}><rect x="1.500" y="1.500" width="11" height="11" /><path d="M1.500 5h11M6 5v7.500" /></Ico>
        </div>
        <span className="ml-[13px]"><Ico s={14}><rect x="1.500" y="1.500" width="11" height="11" /><path d="M7 1.500v11" /></Ico></span>
        <span className="ml-[19px]"><Ico s={14}><path d="M1.500 1.500h11v11h-11M8 1.500v7H1.500" /></Ico></span>
        <div className="ml-[13px] w-px h-[18px] bg-[#cfd2d6]" />
        <span className="ml-[18px] w-[26px] whitespace-nowrap">60%</span>
        <span className="ml-[13px]"><Chev /></span>
        <div className="ml-[19px] w-[10px] h-[2px] bg-[#333]" />
        <div className="ml-[16px] w-[106px] h-[2px] bg-[#b5b5b5] relative">
          <div className="absolute left-0 top-0 h-full w-[30px] bg-[#2455d8]" />
          <div className="absolute left-[27px] top-[-3px] w-[8px] h-[8px] rounded-full bg-white border-2 border-[#999]" />
        </div>
        <svg width="12" height="12" viewBox="0 0 12 12" stroke="#333" strokeWidth="1.600" className="ml-[13px]"><path d="M6 1v10M1 6h10" /></svg>
        <span className="ml-[19px]"><Ico s={14}><path d="M9 1h4v4M13 1L9 5M5 13H1V9M1 13l4-4" /></Ico></span>
      </div>
    </div>
  );
}

/* ---------- menu ---------- */
function MenuIcon({ k }: { k: number }) {
  const g = <path d="M1.500 1.500h14v14h-14zM1.500 6h14M1.500 11h14M6 1.500v14" />;
  switch (k) {
    case 0:
      return <Ico s={17}><path d="M4 1v15M1 4h12M1 13h7M12 1v6" /><path d="M9.500 10h6M9.500 13h6M14 8l-3 8" stroke={BLUE} /></Ico>;
    case 1:
      return <Ico s={17}><path d="M1.500 1.500h14v14h-14z" /><path d="M5 13V4M3 6l2-2 2 2M9 8v5M11 8h3v5h-3z" stroke={BLUE} /></Ico>;
    case 2:
      return <Ico s={17}><path d="M3.500 1.500h-2v14h2M13.500 1.500h2v14h-2" /><path d="M5.500 1.500h6v14h-6zM5.500 8.500h6" stroke={BLUE} /></Ico>;
    case 3:
      return <Ico s={17} c={BLUE}><rect x="1.500" y="1.500" width="14" height="14" /><path d="M1.500 6.500h14M1.500 11h14M8.500 1.500v14" stroke="#3c3c3c" /></Ico>;
    case 4:
      return <Ico s={17}><rect x="1.500" y="1.500" width="14" height="14" /><path d="M8 5.500h5M8 11.500h5" /><circle cx="5" cy="5.500" r="1.500" stroke={BLUE} /><path d="M5 9.500l2 2-2 2-2-2z" stroke={BLUE} /></Ico>;
    case 5:
      return <Ico s={17}>{g}<path d="M11 12v5M8.500 14.500h6" stroke={GREEN} strokeWidth="1.300" /></Ico>;
    case 6:
      return <Ico s={17}>{g}<path d="M9 13l4-4 3 2.500-4 4.500h-2z" stroke="#e0405a" fill="#fff" /></Ico>;
    default:
      return <Ico s={17}>{g}<circle cx="12" cy="12.500" r="3.500" stroke={BLUE} fill="#fff" /><circle cx="12" cy="12.500" r="1" stroke={BLUE} /></Ico>;
  }
}
const items: [string, number, boolean][] = [
  ["突出显示单元格规则(H)", 0, true],
  ["项目选取规则(T)", 1, true],
  ["-", -1, false],
  ["数据条(D)", 2, true],
  ["色阶(S)", 3, true],
  ["图标集(I)", 4, true],
  ["-", -1, false],
  ["新建规则(N)...", 5, false],
  ["清除规则(C)", 6, true],
  ["管理规则(R)...", 7, false],
];
const swatches = [
  ["#63be7b", "#c1da81", "#ffeb84", "#fbaa77", "#f8696b"],
  ["#f8696b", "#fbaa77", "#e9c06e", "#b9d57a", "#63be7b"],
  ["#63be7b", "#b1d5b5", "#ffffff", "#fcbfc0", "#f8696b"],
  ["#f8696b", "#fcbfc0", "#ffffff", "#b1d5b5", "#63be7b"],
  ["#5a8ac6", "#a8c0e0", "#ffffff", "#fcbfc0", "#f8696b"],
  ["#f8696b", "#fcbfc0", "#ffffff", "#a8c0e0", "#5a8ac6"],
  ["#ffffff", "#fcc4c5", "#fbaaab", "#f98f90", "#f8696b"],
  ["#f8696b", "#f98f90", "#fbaaab", "#fcd6d6", "#ffffff"],
  ["#63be7b", "#8fcf9f", "#b1dfbf", "#d8efdf", "#ffffff"],
  ["#ffffff", "#d8efdf", "#b1dfbf", "#8fcf9f", "#63be7b"],
  ["#63be7b", "#8cc97c", "#b1d580", "#d7e082", "#ffeb84"],
  ["#ffeb84", "#d7e082", "#b1d580", "#8cc97c", "#63be7b"],
];
function Swatch({ colors }: { colors: string[] }) {
  return (
    <svg width="28" height="26" viewBox="0 0 28 26" className="shrink-0">
      <rect x="0" y="0" width="28" height="26" fill="#fff" />
      {colors.map((c, i) => (
        <g key={i}>
          <rect x="6.500" y={i * 5 + 0.5} width="15" height="5" fill={c} />
          <rect x="15" y={i * 5 + 2.6} width="5.500" height="1" fill="#333" />
          <path d={`M0 ${i * 5 + 0.5}H28`} stroke="#8a8a8a" strokeWidth="0.8" />
        </g>
      ))}
      <rect x=".5" y=".5" width="27" height="25" fill="none" stroke="#888" />
      <path d="M6.500 0v26M21.500 0v26" stroke="#888" />
    </svg>
  );
}
function Menus() {
  return (
    <>
      <div className="absolute left-[961px] top-[142px] w-[212px] h-[310px] rounded-[8px] bg-white shadow-[0_2px_14px_rgba(0,0,0,0.2)] py-[6px] px-[8px] text-[12px] text-[#333]">
        {items.map(([t, k, arrow], i) =>
          t === "-" ? (
            <div key={i} className="h-[5px] mx-[8px] border-t border-[#e4e4e4] translate-y-[2px]" />
          ) : (
            <div key={i} className={`flex items-center h-[36px] pl-[8px] pr-[10px] rounded-[6px] ${k === 3 ? "bg-[#f0f0f0]" : ""}`}>
              <MenuIcon k={k} />
              <span className="ml-[6px] flex-1 whitespace-nowrap">{t}</span>
              {arrow && <Right />}
            </div>
          )
        )}
      </div>
      <div className="absolute left-[1172px] top-[264px] w-[183px] h-[179px] rounded-[8px] bg-white shadow-[0_2px_14px_rgba(0,0,0,0.2)] pt-[13px] px-[13px] text-[12px] text-[#333]">
        <div className="grid grid-cols-[repeat(4,40px)] gap-y-[4px]">
          {swatches.map((c, i) => (
            <div key={i} className={`w-[36px] h-[36px] rounded-[4px] flex items-center justify-center ${i === 2 ? "bg-[#f0f0f0]" : ""}`}>
              <Swatch colors={c} />
            </div>
          ))}
        </div>
        <div className="mt-[4px] mx-[2px] border-t border-[#e4e4e4]" />
        <div className="mt-[10px] ml-[2px]">其他规则(M)...</div>
      </div>
    </>
  );
}

/* ---------- overlay drawings ---------- */
function Arrow({ x1, y1, x2, y2 }: { x1: number; y1: number; x2: number; y2: number }) {
  const dx = x2 - x1, dy = y2 - y1, len = Math.hypot(dx, dy);
  const ux = dx / len, uy = dy / len, px = -uy, py = ux;
  const hl = 27, hw = 8, nk = 2.6, tl = 1.1, nb = 21;
  const pt = (a: number, b: number) => `${x2 - ux * a + px * b},${y2 - uy * a + py * b}`;
  const points = [
    pt(0, 0), pt(hl, hw), pt(nb, nk), pt(len, tl), pt(len, -tl), pt(nb, -nk), pt(hl, -hw),
  ].join(" ");
  return <polygon points={points} fill="#f00000" />;
}
function Overlay() {
  return (
    <>
      <div className="absolute left-[648px] top-[880px] w-[537px] h-[125px] bg-white/65" />
      <div className="absolute left-[662px] top-[876px] text-[56px] leading-[72px] font-black text-[#ff2d2d] whitespace-nowrap">电脑技术网</div>
      <div className="absolute left-[662px] top-[952px] text-[41.500px] leading-[50px] font-bold text-[#2f7fe8] [font-family:'Liberation_Serif',serif] whitespace-nowrap">www.tagxp.com</div>
      <div className="absolute left-[962px] top-[876px] w-[215px] h-[129px] overflow-hidden">
        <div className="h-[150px] rounded-[38px] bg-[#2f80ff] flex justify-center pt-[8px] pr-[8px] text-white text-[108px] leading-[108px] font-bold tracking-[-0.1em] [font-family:'Liberation_Sans',sans-serif]">TAG</div>
      </div>
      <svg className="absolute left-0 top-0 pointer-events-none drop-shadow-[1px_2px_2px_rgba(0,0,0,0.45)]" width="1400" height="1039">
        <Arrow x1={303} y1={207} x2={298} y2={75} />
        <Arrow x1={893} y1={193} x2={968} y2={122} />
        <Arrow x1={927} y1={318} x2={974} y2={280} />
        <Arrow x1={1138} y1={452} x2={1262} y2={308} />
        <Arrow x1={915} y1={593} x2={793} y2={559} />
      </svg>
      <svg className="absolute left-[1291px] top-[307px]" width="15" height="22" viewBox="0 0 15 22">
        <path d="M1.500 1v15l3.500-3 3 6.500 2.500-1-3-6.500h5z" fill="#fff" stroke="#222" strokeWidth="1" />
      </svg>
      <svg className="absolute left-[1240px] top-[988px]" width="82" height="46" viewBox="0 0 82 46" fill="none">
        <path d="M46 3C28 6 8 14 3 26c-3 9 6 15 18 12" stroke="#3f8fe0" strokeWidth="5" opacity=".85" />
        <path d="M36 15c-12 1-20 6-20 13 0 5 6 7 13 4" stroke="#5fa8e8" strokeWidth="3.500" opacity=".85" />
        <path d="M10 40c14 6 30 0 40-12" stroke="#9fd05a" strokeWidth="3.500" opacity=".85" />
        <path d="M30 30c6 1 10-1 12-5" stroke="#f3d34a" strokeWidth="2.500" />
      </svg>
      <div className="absolute left-[1283px] top-[985px] text-[21.500px] leading-[28px] font-bold text-[#2a82e4] whitespace-nowrap">极光下载站</div>
      <div className="absolute left-[1285px] top-[1011px] text-[18.500px] leading-[22px] text-[#3fb56a]/90 [font-family:'Liberation_Sans',sans-serif] whitespace-nowrap">www.xz7.com</div>
    </>
  );
}

export default function App() {
  return (
    <div className={`relative w-[1400px] h-[1039px] overflow-hidden bg-[#e4e7ec] flex flex-col text-[#333] ${UI}`}>
      <TitleBar />
      <MenuBar />
      <Ribbon />
      <FormulaBar />
      <Sheet />
      <SheetTabs />
      <StatusBar />
      <Menus />
      <Overlay />
    </div>
  );
}
